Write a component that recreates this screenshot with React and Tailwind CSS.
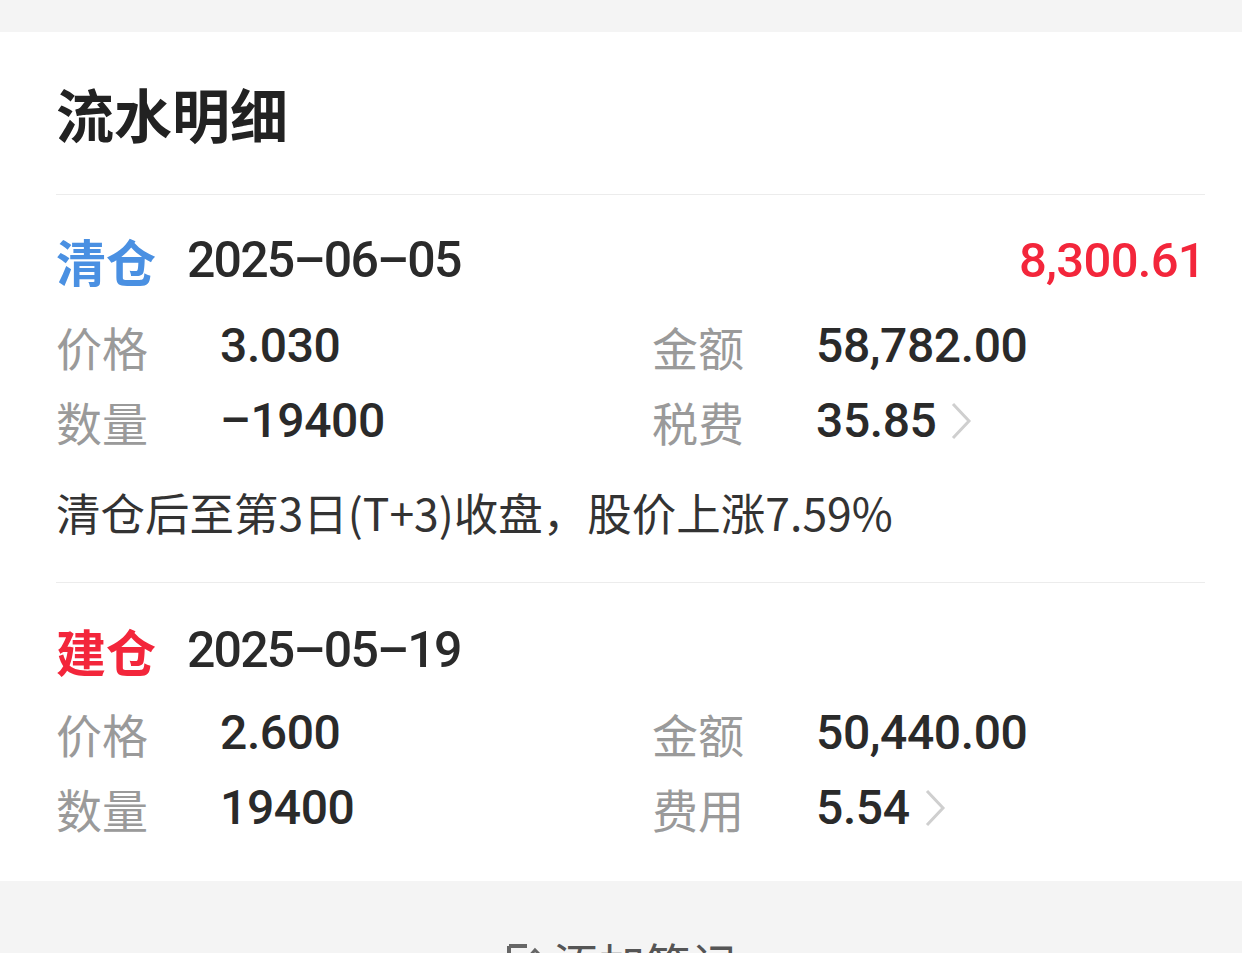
const font = { fontFamily: '"Noto Sans CJK SC", "Noto Sans", sans-serif' }

function Chevron() {
  return (
    <svg width="22" height="38" viewBox="0 0 22 38" className="ml-[14px] shrink-0">
      <path d="M3 2 L19 19 L3 36" fill="none" stroke="#cfcfcf" strokeWidth="3" />
    </svg>
  )
}

function Cell({ label, value, arrow, wide }) {
  return (
    <div className={`flex items-center h-[75px] ${wide ? 'w-[596px]' : 'flex-1'}`}>
      <span className="w-[164px] text-[46px] text-[#9a9a9a] leading-none">{label}</span>
      <span className="text-[48px] text-[#2a2a2a] leading-none font-medium font-['Roboto',sans-serif] tracking-[-0.4px]">{value}</span>
      {arrow && <Chevron />}
    </div>
  )
}

function Header({ tag, tagColor, date, profit }) {
  return (
    <div className="flex items-center h-[70px]">
      <span className={`text-[50px] font-bold leading-none ${tagColor}`}>{tag}</span>
      <span className="ml-[31px] text-[50px] text-[#2a2a2a] leading-none font-medium font-['Roboto',sans-serif] tracking-[-1.8px]">{date}</span>
      {profit && (
        <span className="ml-auto text-[49px] text-[#f3263b] leading-none font-medium font-['Roboto',sans-serif] tracking-[-0.7px]">{profit}</span>
      )}
    </div>
  )
}

export default function App() {
  return (
    <div className="min-h-screen bg-[#f4f4f4] pt-[32px]" style={font}>
      <div className="bg-white pl-[56px] pr-[37px]">
        <div className="h-[162px] flex items-center">
          <h1 className="text-[58px] font-bold text-[#222] leading-none">流水明细</h1>
        </div>
        <div className="border-t border-[#ececec]" />
        <div className="pt-[30px] pb-[32px]">
          <Header tag="清仓" tagColor="text-[#4a90e2]" date="2025–06–05" profit="8,300.61" />
          <div className="mt-[13px]">
            <div className="flex">
              <Cell wide label="价格" value="3.030" />
              <Cell label="金额" value="58,782.00" />
            </div>
            <div className="flex">
              <Cell wide label="数量" value="–19400" />
              <Cell label="税费" value="35.85" arrow />
            </div>
          </div>
          <div className="mt-[17px] h-[75px] flex items-center text-[44.5px] text-[#333] leading-none">
            清仓后至第3日(T+3)收盘，股价上涨7.59%
          </div>
        </div>
        <div className="border-t border-[#ececec]" />
        <div className="pt-[32px] pb-[36px]">
          <Header tag="建仓" tagColor="text-[#f3263b]" date="2025–05–19" />
          <div className="mt-[10px]">
            <div className="flex">
              <Cell wide label="价格" value="2.600" />
              <Cell label="金额" value="50,440.00" />
            </div>
            <div className="flex">
              <Cell wide label="数量" value="19400" />
              <Cell label="费用" value="5.54" arrow />
            </div>
          </div>
        </div>
      </div>
      <div className="flex justify-center items-center gap-[12px] pt-[58px] text-[#555]">
        <svg width="36" height="40" viewBox="0 0 36 40">
          <path d="M4 4 H22 M4 4 V36 H30 V22" fill="none" stroke="#666" strokeWidth="4" />
          <path d="M14 26 L30 8 L34 12 L18 30 L12 32 Z" fill="none" stroke="#666" strokeWidth="3" />
        </svg>
        <span className="text-[46px] leading-none">添加笔记</span>
      </div>
    </div>
  )
}
